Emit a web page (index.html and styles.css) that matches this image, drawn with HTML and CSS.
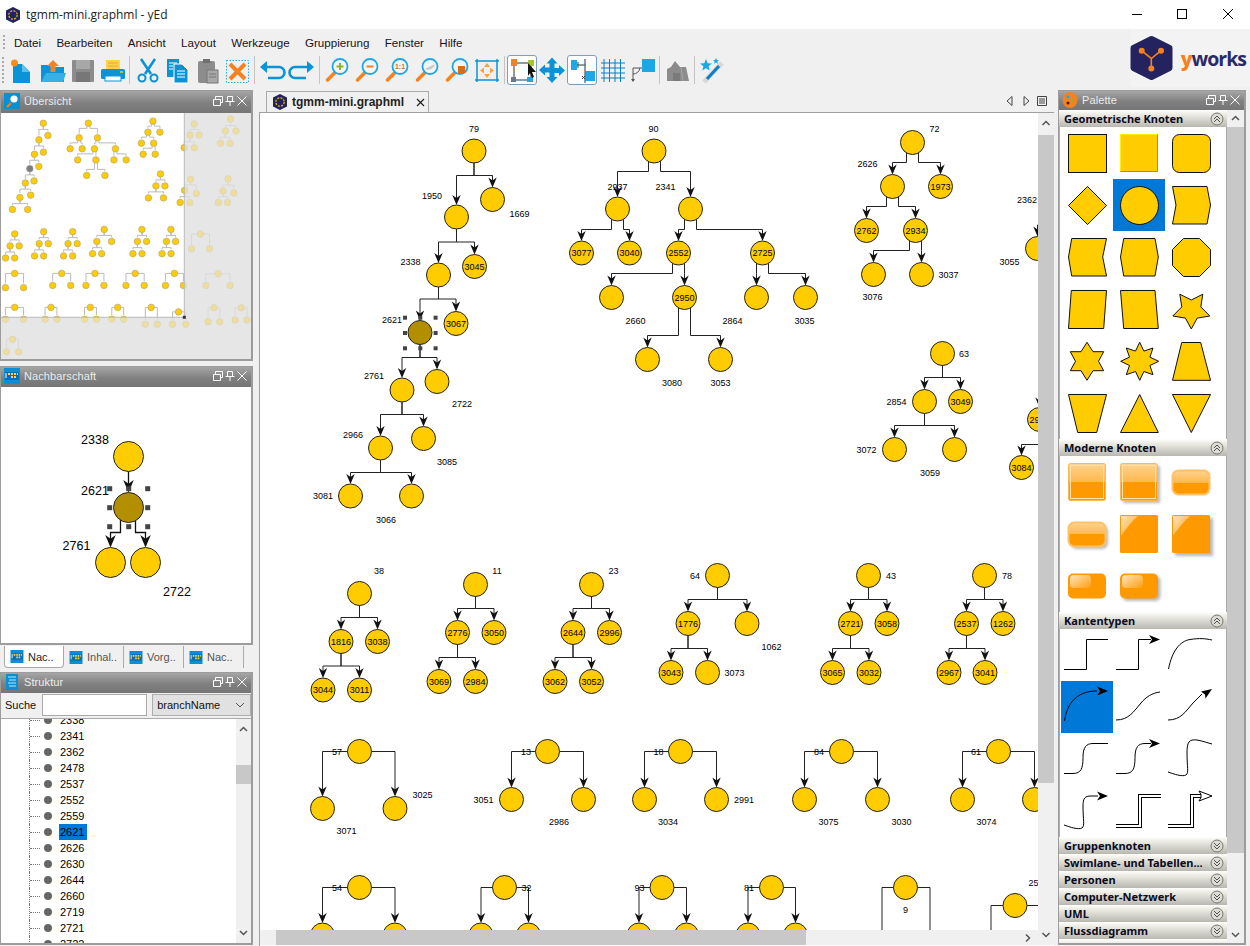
FILE: index.html
```html
<!DOCTYPE html>
<html lang="de">
<head>
    <meta charset="UTF-8">
    <title>tgmm-mini.graphml - yEd</title>
    <link rel="stylesheet" href="styles.css">
</head>
<body>
    <!-- shared icons -->
    <svg class="defs" width="0" height="0">
        <defs>
            <symbol id="ic-restore" viewBox="0 0 12 12"><path d="M1.5 4.5h7v6h-7zM3.5 4.5v-3h7v6h-2" fill="none" stroke="#fff"/></symbol>
            <symbol id="ic-pin" viewBox="0 0 12 12"><path d="M3.5 1.5h5v5h-5zM1.5 6.5h9M6 6.5v4.5" fill="none" stroke="#fff"/></symbol>
            <symbol id="ic-close" viewBox="0 0 12 12"><path d="M1.5 1.5l9 9M10.5 1.5l-9 9" fill="none" stroke="#fff"/></symbol>
            <symbol id="ic-table" viewBox="0 0 16 16"><rect width="16" height="16" fill="#0a8fd6"/><rect y="4" x="1" width="14" height="8" fill="#0a6fb0"/><path d="M4 5h2v2H4zM7 5h2v2H7zM10 5h2v2h-2zM7 8h2v2H7zM10 8h2v2h-2zM13 5h1v2h-1z" fill="#ffd24d"/><path d="M1.5 5h1v5h-1z" fill="#fff"/></symbol>
            <symbol id="ic-up" viewBox="0 0 14 14"><circle cx="7" cy="7" r="6" fill="#dcdcd4" stroke="#77776f"/><path d="M4 7l3-3 3 3M4 10l3-3 3 3" fill="none" stroke="#55554f"/></symbol>
            <symbol id="ic-down" viewBox="0 0 14 14"><circle cx="7" cy="7" r="6" fill="#dcdcd4" stroke="#77776f"/><path d="M4 4l3 3 3-3M4 7l3 3 3-3" fill="none" stroke="#55554f"/></symbol>
            <symbol id="ic-yed" viewBox="0 0 16 16"><path d="M8 0l7 3.5v9L8 16l-7-3.5v-9z" fill="#24235f"/><circle cx="8" cy="8" r="4.2" fill="none" stroke="#e8c400" stroke-width="1.2" stroke-dasharray="2 1.3"/></symbol>
            <symbol id="mag" viewBox="0 0 28 28"><path d="M12 16.5L4.5 24" stroke="#f58220" stroke-width="3.5" stroke-linecap="round"/><circle cx="17" cy="10.5" r="7.5" fill="#f4f4f4" stroke="#1ea7e6" stroke-width="1.8"/></symbol>
            <linearGradient id="gloss" x1="0" y1="0" x2="0" y2="1">
                <stop offset="0" stop-color="#ffd38f"/>
                <stop offset=".5" stop-color="#ffb84d"/>
                <stop offset=".5" stop-color="#ff9900"/>
                <stop offset="1" stop-color="#ff9900"/>
            </linearGradient>
            <linearGradient id="shine" x1="0" y1="0" x2="1" y2="1">
                <stop offset="0" stop-color="#fff" stop-opacity=".75"/>
                <stop offset="1" stop-color="#fff" stop-opacity=".05"/>
            </linearGradient>
            <filter id="soft" x="-20%" y="-20%" width="140%" height="140%"><feGaussianBlur stdDeviation="1.4"/></filter>
        </defs>
    </svg>

    <header class="titlebar">
        <svg class="app-icon"><use href="#ic-yed"/></svg>
        <span class="app-title">tgmm-mini.graphml - yEd</span>
        <div class="win-btns">
            <svg width="46" height="26" viewBox="0 0 46 26"><path d="M20 12.500h10" stroke="#000"/></svg>
            <svg width="46" height="26" viewBox="0 0 46 26"><rect x="19.500" y="7.500" width="9" height="9" fill="none" stroke="#000"/></svg>
            <svg width="46" height="26" viewBox="0 0 46 26"><path d="M19 7l10 10M29 7L19 17" stroke="#000"/></svg>
        </div>
    </header>

    <div class="topbar">
        <div class="bars">
            <nav class="menubar">
                <span class="grip"></span>
                <span>Datei</span><span>Bearbeiten</span><span>Ansicht</span><span>Layout</span><span>Werkzeuge</span><span>Gruppierung</span><span>Fenster</span><span>Hilfe</span>
            </nav>
            <div class="toolbar">
                <span class="grip tall"></span>
                <span class="tool"><svg viewBox="0 0 28 28"><path d="M5 8h9l8 8v11H5z" fill="#0a93d6"/><path d="M14 8l8 8h-8z" fill="#5cc0ee"/><circle cx="6.5" cy="7" r="3.5" fill="#f58f1f"/></svg></span>
                <span class="tool"><svg viewBox="0 0 28 28"><path d="M3 9h8l2 2h13v15H3z" fill="#0a93d6"/><path d="M3 26l5-9h20l-3 9z" fill="#38b0e6"/><path d="M15 4l6 6h-3.500v6h-5v-6H9z" fill="#f58220"/></svg></span>
                <span class="tool"><svg viewBox="0 0 28 28"><rect x="4" y="4" width="22" height="22" rx="1" fill="#8c8c8c"/><rect x="8" y="4" width="14" height="9" fill="#a8a8a8"/><rect x="8" y="16" width="14" height="10" fill="#777"/></svg></span>
                <span class="tool"><svg viewBox="0 0 28 28"><rect x="8" y="4" width="14" height="11" fill="#ffd24d"/><path d="M10 7h10M10 10h10" stroke="#f0a030"/><rect x="3" y="13" width="24" height="10" rx="1.500" fill="#0a93d6"/><rect x="7" y="20" width="16" height="5" fill="#fff" stroke="#0a93d6"/><path d="M22 16h3" stroke="#9ad14b" stroke-width="2"/></svg></span>
                <span class="sep"></span>
                <span class="tool"><svg viewBox="0 0 28 28"><path d="M12 18L22 3M18 18L8 3" stroke="#0a93d6" stroke-width="2.600" fill="none"/><circle cx="9" cy="22" r="3.500" fill="none" stroke="#0a93d6" stroke-width="2"/><circle cx="21" cy="22" r="3.500" fill="none" stroke="#0a93d6" stroke-width="2"/></svg></span>
                <span class="tool"><svg viewBox="0 0 28 28"><rect x="4" y="3" width="12" height="18" fill="#0a93d6"/><path d="M11 8h8l6 6v13H11z" fill="#0a93d6" stroke="#fff"/><path d="M6 7h8M6 10h4M6 13h4M14 15h8M14 18h8M14 21h8" stroke="#fff"/></svg></span>
                <span class="tool"><svg viewBox="0 0 28 28"><rect x="5" y="5" width="17" height="22" rx="2" fill="#8c8c8c"/><rect x="10" y="3" width="7" height="4" fill="#6f6f6f"/><rect x="14" y="14" width="11" height="13" fill="#a8a8a8" stroke="#777"/><path d="M16 18h7M16 21h7" stroke="#777"/></svg></span>
                <span class="tool"><svg viewBox="0 0 28 28"><rect x="3.500" y="4.500" width="22" height="22" fill="none" stroke="#35a8e0" stroke-dasharray="1.500 1.500"/><path d="M7 8l15 15M22 8L7 23" stroke="#f58220" stroke-width="4"/></svg></span>
                <span class="sep"></span>
                <span class="tool"><svg viewBox="0 0 28 28"><path d="M8 11h13a5.500 5.500 0 0 1 0 11H10" fill="none" stroke="#0a93d6" stroke-width="2.600"/><path d="M2 11l7-6v12z" fill="#0a93d6"/></svg></span>
                <span class="tool"><svg viewBox="0 0 28 28"><path d="M20 11H7a5.500 5.500 0 0 0 0 11h11" fill="none" stroke="#0a93d6" stroke-width="2.600"/><path d="M26 11l-7-6v12z" fill="#0a93d6"/></svg></span>
                <span class="sep"></span>
                <span class="tool"><svg viewBox="0 0 28 28"><use href="#mag"/><path d="M13.500 10.500h7M17 7v7" stroke="#8fb52a" stroke-width="2"/></svg></span>
                <span class="tool"><svg viewBox="0 0 28 28"><use href="#mag"/><path d="M13.500 10.500h7" stroke="#f58220" stroke-width="2"/></svg></span>
                <span class="tool"><svg viewBox="0 0 28 28"><use href="#mag"/><text class="one" x="17" y="13">1:1</text></svg></span>
                <span class="tool"><svg viewBox="0 0 28 28"><use href="#mag"/><path d="M12 13a7 7 0 0 0 10-5z" fill="#c8c8c8"/></svg></span>
                <span class="tool"><svg viewBox="0 0 28 28"><use href="#mag"/><rect x="15" y="10" width="7" height="7" fill="#e06a10"/></svg></span>
                <span class="tool"><svg viewBox="0 0 28 28"><path d="M2 5h24M2 24h24M4 3v23M24 3v23" stroke="#0a93d6" stroke-width="1.500"/><path d="M14 7l3 4h-6zM14 22l-3-4h6zM7 14.500l4-3v6zM21 14.500l-4-3v6z" fill="#f9a040"/></svg></span>
                <span class="sep"></span>
                <span class="tool on"><svg viewBox="0 0 28 28"><path d="M6 7v17h17V7z" fill="none" stroke="#6c7a86" stroke-width="1.500"/><rect x="3" y="3" width="6" height="7" fill="#f58220"/><rect x="20" y="4" width="6" height="6" fill="#a6c438"/><rect x="3" y="21" width="5" height="5" fill="#6c7a86"/><rect x="19" y="21" width="6" height="5" fill="#1ea7e6"/><path d="M20 7l8 9-4 0 2 5-2 1-2-5-2 3z" fill="#111"/></svg></span>
                <span class="tool"><svg viewBox="0 0 28 28"><path d="M14 1.500l5.500 6H16.500v4.500H21V9l6 5.500-6 5.500v-3h-4.500V21h3L14 27l-5.500-6h3v-4.500H7v3l-6-5.500 6-5.500v3h4.500V7.500h-3z" fill="#0a93d6"/></svg></span>
                <span class="tool on"><svg viewBox="0 0 28 28"><rect x="3" y="4" width="6" height="10" fill="#1ea7e6"/><rect x="17" y="15" width="10" height="10" fill="#1ea7e6"/><path d="M9 9h9M17 3v24" stroke="#6c7a86" stroke-width="1.500"/><path d="M10 6v6M14 20l3 3M17 20l-3 3" stroke="#444"/></svg></span>
                <span class="tool"><svg viewBox="0 0 28 28"><path d="M3 7h24M3 12h24M3 17h24M3 22h24M6 3v23M11.500 3v23M17 3v23M22.500 3v23" stroke="#0a7fc8"/></svg></span>
                <span class="tool"><svg viewBox="0 0 28 28"><rect x="14" y="3" width="13" height="13" fill="#1ea7e6"/><path d="M5 25V12h9M5 18a7 7 0 0 0 7-6" fill="none" stroke="#555"/><path d="M3 23h4l-2 3z" fill="#555"/></svg></span>
                <span class="sep"></span>
                <span class="tool"><svg viewBox="0 0 28 28"><path d="M4 25V13l4-2 4-6 5 6h6l3 14z" fill="#8c8c8c"/><path d="M10 17h7v8h-7z" fill="#7a7a7a"/><path d="M18 11l2 14" stroke="#a6a6a6"/></svg></span>
                <span class="sep"></span>
                <span class="tool"><svg viewBox="0 0 28 28"><path d="M8 3l1.700 4.200 4.300.3-3.400 2.800 1.100 4.300L8 12.300l-3.700 2.300 1.100-4.300L2 7.500l4.300-.3zM18 2l.9 2 2.100.2-1.600 1.400.500 2.100L18 6.600l-1.900 1.100.500-2.100L15 4.200l2.100-.2z" fill="#1ea7e6"/><path d="M6 26L24 7" stroke="#d8d8d8" stroke-width="5"/><path d="M9 23L21 10" stroke="#0a7fc8" stroke-width="3"/></svg></span>
            </div>
        </div>
        <div class="logo">
            <svg width="44" height="46" viewBox="0 0 44 46">
                <polygon points="21.500,4 39.500,13 39.500,33 21.500,42 3.500,33 3.500,13" fill="#24235f" stroke="#24235f" stroke-width="6" stroke-linejoin="round"/>
                <path d="M11.500 15.700L21.300 23.500 31 15.700M21.300 23.500V33" fill="none" stroke="#f58220" stroke-width="1.600"/>
                <circle cx="11.700" cy="15.700" r="3" fill="#f58220"/><circle cx="31" cy="15.700" r="3" fill="#f58220"/><circle cx="21.300" cy="33.500" r="3" fill="#f58220"/>
            </svg>
            <span class="logo-text"><b>y</b>works</span>
        </div>
    </div>

    <main class="workspace">
        <div class="left-col">
            <section class="panel overview">
                <div class="panel-head">
                    <svg class="panel-icon" viewBox="0 0 16 16"><rect width="16" height="16" fill="#0a8fd6"/><path d="M3 14l4-4" stroke="#f58220" stroke-width="2"/><circle cx="10" cy="6" r="3.600" fill="#fff"/></svg>
                    <span>Übersicht</span>
                    <span class="panel-tools"><svg><use href="#ic-restore"/></svg><svg><use href="#ic-pin"/></svg><svg><use href="#ic-close"/></svg></span>
                </div>
                <svg id="overview-svg" class="fill-svg" viewBox="304.8 110 1000 984"></svg>
            </section>
            <section class="panel neighbours">
                <div class="panel-head">
                    <svg class="panel-icon"><use href="#ic-table"/></svg>
                    <span>Nachbarschaft</span>
                    <span class="panel-tools"><svg><use href="#ic-restore"/></svg><svg><use href="#ic-pin"/></svg><svg><use href="#ic-close"/></svg></span>
                </div>
                <svg id="neighbour-svg" class="fill-svg" viewBox="1 387 250 256"></svg>
            </section>
            <div class="side-tabs">
                <div class="side-tab active"><svg><use href="#ic-table"/></svg>Nac..</div>
                <div class="side-tab"><svg><use href="#ic-table"/></svg>Inhal..</div>
                <div class="side-tab"><svg><use href="#ic-table"/></svg>Vorg..</div>
                <div class="side-tab"><svg><use href="#ic-table"/></svg>Nac..</div>
            </div>
            <section class="panel structure">
                <div class="panel-head">
                    <svg class="panel-icon" viewBox="0 0 16 16"><rect x="2" width="12" height="16" fill="#0a8fd6"/><path d="M4 3h8M5 6h7M4 9h8M5 12h7" stroke="#bfe6fa"/></svg>
                    <span>Struktur</span>
                    <span class="panel-tools"><svg><use href="#ic-restore"/></svg><svg><use href="#ic-pin"/></svg><svg><use href="#ic-close"/></svg></span>
                </div>
                <div class="search-row">
                    <span>Suche</span>
                    <input class="search-input" type="text">
                    <div class="select">branchName<svg width="10" height="6" viewBox="0 0 10 6"><path d="M1 1l4 4 4-4" fill="none" stroke="#555"/></svg></div>
                </div>
                <div class="tree-wrap">
                    <ul class="tree">
                        <li><i></i><b></b><span>2338</span></li>
                        <li><i></i><b></b><span>2341</span></li>
                        <li><i></i><b></b><span>2362</span></li>
                        <li><i></i><b></b><span>2478</span></li>
                        <li><i></i><b></b><span>2537</span></li>
                        <li><i></i><b></b><span>2552</span></li>
                        <li><i></i><b></b><span>2559</span></li>
                        <li class="sel"><i></i><b></b><span>2621</span></li>
                        <li><i></i><b></b><span>2626</span></li>
                        <li><i></i><b></b><span>2630</span></li>
                        <li><i></i><b></b><span>2644</span></li>
                        <li><i></i><b></b><span>2660</span></li>
                        <li><i></i><b></b><span>2719</span></li>
                        <li><i></i><b></b><span>2721</span></li>
                        <li><i></i><b></b><span>2722</span></li>
                    </ul>
                    <div class="vscroll small">
                        <svg width="15" height="20" viewBox="0 0 15 20"><path d="M4 12l3.500-3.500L11 12" fill="none" stroke="#555" stroke-width="1.500"/></svg>
                        <div class="tree-thumb"></div>
                        <svg class="to-end" width="15" height="20" viewBox="0 0 15 20"><path d="M4 8l3.500 3.500L11 8" fill="none" stroke="#555" stroke-width="1.500"/></svg>
                    </div>
                </div>
            </section>
        </div>

        <div class="center-col">
            <div class="doc-tabs">
                <div class="doc-tab">
                    <svg class="doc-icon"><use href="#ic-yed"/></svg>
                    <span>tgmm-mini.graphml</span>
                    <svg width="9" height="9" viewBox="0 0 9 9"><path d="M1 1l7 7M8 1L1 8" stroke="#222" stroke-width="1.200"/></svg>
                </div>
                <div class="doc-nav">
                    <svg width="16" height="12" viewBox="0 0 16 12"><path d="M10 1.500L5 6l5 4.500z" fill="none" stroke="#444"/></svg>
                    <svg width="16" height="12" viewBox="0 0 16 12"><path d="M6 1.500L11 6l-5 4.500z" fill="none" stroke="#444"/></svg>
                    <svg width="16" height="12" viewBox="0 0 16 12"><path d="M3.500 1.500h9v9h-9zM5 4h6M5 6h6M5 8h6" fill="none" stroke="#444"/></svg>
                </div>
            </div>
            <div class="canvas-frame">
                <svg id="canvas-svg" class="canvas-svg" viewBox="260 113 778 817"></svg>
                <div class="vscroll">
                    <svg width="16" height="22" viewBox="0 0 16 22"><path d="M4.500 12L8 8.500l3.500 3.500" fill="none" stroke="#555" stroke-width="1.500"/></svg>
                    <div class="canvas-thumb"></div>
                    <svg class="to-end" width="16" height="20" viewBox="0 0 16 20"><path d="M4.500 8L8 11.500 11.500 8" fill="none" stroke="#555" stroke-width="1.500"/></svg>
                </div>
                <div class="hscroll">
                    <div class="hscroll-thumb"></div>
                    <svg width="16" height="16" viewBox="0 0 16 16"><path d="M6 4.500L9.500 8 6 11.500" fill="none" stroke="#555" stroke-width="1.500"/></svg>
                </div>
            </div>
        </div>

        <section class="panel palette">
            <div class="panel-head">
                <svg class="panel-icon" viewBox="0 0 16 16"><ellipse cx="8" cy="8" rx="7.500" ry="8" fill="#f58220"/><circle cx="6" cy="5" r="1.500" fill="#1ea7e6"/><circle cx="10" cy="8" r="1.500" fill="#8fb52a"/><circle cx="6" cy="11" r="1.500" fill="#24235f"/></svg>
                <span>Palette</span>
                <span class="panel-tools"><svg><use href="#ic-restore"/></svg><svg><use href="#ic-pin"/></svg><svg><use href="#ic-close"/></svg></span>
            </div>
            <div class="palette-body">
                <div class="sections">
                    <div class="sec-head">Geometrische Knoten<svg><use href="#ic-up"/></svg></div>
                    <div class="cells geo">
                        <svg viewBox="0 0 52 52"><rect x="7.500" y="7.500" width="38" height="38"/></svg>
                        <svg viewBox="0 0 52 52"><rect class="bevel" x="7.500" y="7.500" width="37" height="37"/><path d="M7.500 44.500h37v-37" fill="none" stroke="#b38f00"/></svg>
                        <svg viewBox="0 0 52 52"><rect x="7.500" y="7.500" width="38" height="38" rx="7"/></svg>
                        <svg viewBox="0 0 52 52"><polygon points="26.500,7.500 45.500,26.500 26.500,45.500 7.500,26.500"/></svg>
                        <svg class="picked" viewBox="0 0 52 52"><circle cx="26.500" cy="26.500" r="19"/></svg>
                        <svg viewBox="0 0 52 52"><polygon points="7.500,7.500 42,7.500 45.500,26 42,45 7.500,45 11,26"/></svg>
                        <svg viewBox="0 0 52 52"><polygon points="10.700,7.500 45.500,7.500 41.700,26 45.500,45 10.700,45 7.500,26"/></svg>
                        <svg viewBox="0 0 52 52"><polygon points="10.700,7.500 42,7.500 45.300,26 42,45 10.700,45 7.500,26"/></svg>
                        <svg viewBox="0 0 52 52"><polygon points="18.500,7.500 34.500,7.500 45.500,18.500 45.500,34.500 34.500,45.500 18.500,45.500 7.500,34.500 7.500,18.500"/></svg>
                        <svg viewBox="0 0 52 52"><polygon points="10.300,7.500 45.500,7.500 42.700,45.500 7.500,45.500"/></svg>
                        <svg viewBox="0 0 52 52"><polygon points="7.500,7.500 42,7.500 45.300,45.500 10.700,45.500"/></svg>
                        <svg viewBox="0 0 52 52"><polygon points="14.800,11.200 26.300,17 37.800,11.200 35.800,23.900 44.800,33 32.200,35.100 26.300,46 20.400,35.100 7.800,33 16.800,23.900"/></svg>
                        <svg viewBox="0 0 52 52"><polygon points="26,7.300 32,16.700 42.700,16.700 37.500,26.300 42.700,35.700 32,35.700 26,45.300 20,35.700 9.300,35.700 14.500,26.300 9.300,16.700 20,16.700"/></svg>
                        <svg viewBox="0 0 52 52"><polygon points="26.700,7.300 30.900,16.100 40,13 36.900,22.100 45.700,26.300 36.900,30.500 40,39.700 30.900,36.500 26.700,45.300 22.500,36.500 13.300,39.700 16.500,30.500 7.700,26.300 16.500,22.100 13.300,13 22.500,16.100"/></svg>
                        <svg viewBox="0 0 52 52"><polygon points="16.700,7.500 35.700,7.500 45.500,45.300 7.500,45.300"/></svg>
                        <svg viewBox="0 0 52 52"><polygon points="7.500,7.500 45.500,7.500 35.700,45.500 16.700,45.500"/></svg>
                        <svg viewBox="0 0 52 52"><polygon points="26.700,7.500 45.300,45.500 7.500,45.500"/></svg>
                        <svg viewBox="0 0 52 52"><polygon points="7.500,7.500 45.500,7.500 26.300,45.500"/></svg>
                    </div>
                    <div class="sec-head">Moderne Knoten<svg><use href="#ic-up"/></svg></div>
                    <div class="cells modern">
                        <svg viewBox="0 0 52 52"><rect x="7.500" y="7.500" width="37" height="37" rx="2" fill="url(#gloss)" stroke="#ffb84d" stroke-width="1"/><rect x="9.500" y="9.500" width="33" height="33" fill="none" stroke="#ffe0b0"/></svg>
                        <svg viewBox="0 0 52 52"><rect class="shade" x="10" y="10" width="37" height="37"/><rect x="7.500" y="7.500" width="37" height="37" rx="2" fill="url(#gloss)" stroke="#ffb84d"/><rect x="9.500" y="9.500" width="33" height="33" fill="none" stroke="#ffe0b0"/></svg>
                        <svg viewBox="0 0 52 52"><rect x="7.500" y="14.500" width="37" height="24" rx="6" fill="url(#gloss)" stroke="#ffc266" stroke-width="2"/></svg>
                        <svg viewBox="0 0 52 52"><rect class="shade" x="10" y="17" width="37" height="24" rx="6"/><rect x="7.500" y="14.500" width="37" height="24" rx="6" fill="url(#gloss)" stroke="#ffc266" stroke-width="2"/></svg>
                        <svg viewBox="0 0 52 52"><rect x="7" y="7" width="38" height="38" rx="1.500" fill="#ff9900"/><path d="M8 8h17Q17 15 8 28z" fill="url(#shine)"/></svg>
                        <svg viewBox="0 0 52 52"><rect class="shade" x="10" y="10" width="38" height="38"/><rect x="7" y="7" width="38" height="38" rx="1.500" fill="#ff9900"/><path d="M8 8h17Q17 15 8 28z" fill="url(#shine)"/></svg>
                        <svg viewBox="0 0 52 52"><rect x="7" y="13.500" width="38" height="25" rx="5" fill="#ff9900"/><rect x="9" y="15" width="21" height="13" rx="4" fill="url(#shine)"/></svg>
                        <svg viewBox="0 0 52 52"><rect class="shade" x="9.500" y="16" width="38" height="25" rx="5"/><rect x="7" y="13.500" width="38" height="25" rx="5" fill="#ff9900"/><rect x="9" y="15" width="21" height="13" rx="4" fill="url(#shine)"/></svg>
                        <svg viewBox="0 0 52 52"></svg>
                    </div>
                    <div class="sec-head">Kantentypen<svg><use href="#ic-up"/></svg></div>
                    <div class="cells edges">
                        <svg viewBox="0 0 52 52"><path d="M3 40.500h22.500v-30H47"/></svg>
                        <svg viewBox="0 0 52 52"><path d="M3 40.500h22.500v-30H38"/><path class="tip" d="M47 10.500l-11-4.500 3 4.500-3 4.500z"/></svg>
                        <svg viewBox="0 0 52 52"><path d="M3.500 40C7 22 15 12 25 10.500S40 9.500 47 11"/></svg>
                        <svg class="picked" viewBox="0 0 52 52"><path d="M3.500 40C6 22 16 10 36 10"/><path class="tip" d="M47 10l-11-4.500 3 4.500-3 4.500z"/></svg>
                        <svg viewBox="0 0 52 52"><path d="M3 39c13 0 18-9 25-17 5-6 11-10 19-11"/></svg>
                        <svg viewBox="0 0 52 52"><path d="M3 39c13 0 18-9 25-17l9-9"/><path class="tip" d="M47 8l-11 2.500 4 3 .5 4z"/></svg>
                        <svg viewBox="0 0 52 52"><path d="M3 40.500h9c8 0 10-5 10-16 0-10 3-14 10-14h15"/></svg>
                        <svg viewBox="0 0 52 52"><path d="M3 40.500h9c8 0 10-5 10-16 0-10 3-14 10-14h6"/><path class="tip" d="M47 10.500l-11-4.500 3 4.500-3 4.500z"/></svg>
                        <svg viewBox="0 0 52 52"><path d="M3 39c6 2 14 5 18 3 3-2 1-8 1-22 0-11 2-14 10-13 6 1 11 3 15 4"/></svg>
                        <svg viewBox="0 0 52 52"><path d="M3 40c6 2 14 5 18 3 3-2 1-8 1-22 0-8 2-10 8-10h7"/><path class="tip" d="M47 11l-11-4.500 3 4.500-3 4.500z"/></svg>
                        <svg viewBox="0 0 52 52"><path class="dbl-out" d="M3 41h24V11h21"/><path class="dbl-in" d="M3 41h24V11h21"/></svg>
                        <svg viewBox="0 0 52 52"><path class="dbl-out" d="M3 41h24V11h11"/><path class="dbl-in" d="M3 41h24V11h12"/><path class="tip-hollow" d="M47 11l-13-5 2 3.500v3l-2 3.500z"/></svg>
                    </div>
                    <div class="sec-head">Gruppenknoten<svg><use href="#ic-down"/></svg></div>
                    <div class="sec-head">Swimlane- und Tabellen...<svg><use href="#ic-down"/></svg></div>
                    <div class="sec-head">Personen<svg><use href="#ic-down"/></svg></div>
                    <div class="sec-head">Computer-Netzwerk<svg><use href="#ic-down"/></svg></div>
                    <div class="sec-head">UML<svg><use href="#ic-down"/></svg></div>
                    <div class="sec-head">Flussdiagramm<svg><use href="#ic-down"/></svg></div>
                    <div class="sec-head"></div>
                </div>
                <div class="vscroll pal-scroll">
                    <svg width="17" height="17" viewBox="0 0 17 17"><path d="M5 10l3.500-3.500L12 10" fill="none" stroke="#555" stroke-width="1.500"/></svg>
                    <div class="pal-thumb"></div>
                    <svg class="to-end" width="17" height="16" viewBox="0 0 17 16"><path d="M5 6l3.500 3.500L12 6" fill="none" stroke="#555" stroke-width="1.500"/></svg>
                </div>
            </div>
        </section>
    </main>

    <script src="graph.js"></script>
</body>
</html>
```

FILE: styles.css
```css
* {
    box-sizing: border-box;
}

html, body {
    margin: 0;
    height: 946px;
    overflow: hidden;
    background: #f0f0f0;
    font-family: "Liberation Sans", Arial, sans-serif;
    font-size: 11px;
    color: #111;
}

.defs {
    position: absolute;
}

/* title bar */
.titlebar {
    height: 29px;
    background: #fff;
    display: flex;
    align-items: center;
    padding-left: 5px;
}
.app-icon {
    width: 16px;
    height: 16px;
}
.app-title {
    margin-left: 5px;
    font-family: "Open Sans", sans-serif;
    font-size: 12px;
    color: #222;
}
.win-btns {
    margin-left: auto;
    display: flex;
}

/* menu and toolbar */
.topbar {
    height: 61px;
    display: flex;
    justify-content: space-between;
    background: #f0f0f0;
}
.menubar {
    height: 24px;
    display: flex;
    align-items: center;
    gap: 15.3px;
    padding: 2px 0 0 14px;
    font-size: 11.6px;
    color: #1a1020;
}
.grip {
    width: 2px;
    height: 14px;
    margin-left: -11px;
    margin-right: -6.300px;
    background: repeating-linear-gradient(#aaa 0 2px, transparent 2px 4px);
}
.grip.tall {
    height: 26px;
    margin: 0 3px 0 2px;
}
.toolbar {
    height: 33px;
    display: flex;
    align-items: center;
}
.tool {
    width: 30px;
    height: 30px;
    display: flex;
    align-items: center;
    justify-content: center;
    border: 1px solid transparent;
}
.tool svg {
    width: 28px;
    height: 28px;
    flex: none;
}
.tool.on {
    background: #fff;
    border-color: #7f9db9;
    border-radius: 3px;
}
.one {
    font: bold 7px "Liberation Sans", sans-serif;
    text-anchor: middle;
    fill: #d9731a;
}
.sep {
    width: 5px;
    height: 28px;
    background: linear-gradient(#c4c4c4, #c4c4c4) center / 1px 100% no-repeat;
}
.logo {
    display: flex;
    align-items: center;
    gap: 7px;
    padding-right: 4px;
    height: 58px;
    background: #f3f3f3;
}
.logo-text {
    font: bold 19.500px "Open Sans", sans-serif;
    letter-spacing: -1px;
    color: #2b2a66;
}
.logo-text b {
    color: #f58220;
}

/* main three columns */
.workspace {
    height: 856px;
    display: grid;
    grid-template-columns: 253px 805px 188px;
    padding-right: 4px;
}
.left-col {
    display: flex;
    flex-direction: column;
}
.panel {
    border: 1px solid #9c9c9c;
    border-width: 1px 2px 2px 1px;
    background: #fff;
    display: flex;
    flex-direction: column;
}
.panel-head {
    height: 22px;
    flex: none;
    display: flex;
    align-items: center;
    padding: 0 3px 2px;
    background: linear-gradient(#a6a6a6, #808080 55%, #757575);
    color: #ececec;
    font-size: 11px;
    letter-spacing: .1px;
}
.panel-icon {
    width: 16px;
    height: 16px;
    margin-right: 4px;
    flex: none;
}
.panel-tools {
    margin-left: auto;
    display: flex;
}
.panel-tools svg {
    width: 12px;
    height: 12px;
}
.fill-svg {
    display: block;
    width: 100%;
    flex: 1;
    min-height: 0;
}

.overview {
    height: 271px;
}
.overview .fill-svg {
    background: #e6e6e6;
}
.neighbours {
    height: 279px;
    margin-top: 5px;
}
.neighbours .panel-head {
    height: 20px;
}
.side-tabs {
    height: 22px;
    flex: none;
    margin: 1px 0 4px 4px;
    display: flex;
    color: #555;
}
.side-tab {
    width: 60px;
    display: flex;
    align-items: center;
    gap: 3px;
    padding-left: 4px;
    border-right: 1px solid #aaa;
}
.side-tab svg {
    width: 16px;
    height: 13px;
}
.side-tab.active {
    border: 1px solid #aaa;
    border-top: 0;
    border-radius: 0 0 4px 4px;
    background: #fff;
    color: #222;
}
.structure {
    height: 273px;
    background: #f0f0f0;
}
.structure .panel-head {
    height: 20px;
}
.search-row {
    height: 26px;
    flex: none;
    display: flex;
    align-items: center;
    padding: 0 0 1px 4px;
    border-bottom: 1px solid #aaa;
}
.search-input {
    width: 105px;
    height: 22px;
    margin: 0 5px 0 6px;
    border: 1px solid #aaa;
    background: #fff;
}
.select {
    width: 100px;
    height: 22px;
    display: flex;
    align-items: center;
    justify-content: space-between;
    padding: 0 5px 0 4px;
    background: #e1e1e1;
    border: 1px solid #adadad;
}
.tree-wrap {
    flex: 1;
    min-height: 0;
    background: #fff;
    display: flex;
    overflow: hidden;
}
.tree {
    flex: 1;
    list-style: none;
    margin: -7px 0 0 0;
    padding: 0 0 0 28px;
}
.tree li {
    height: 16px;
    display: flex;
    align-items: center;
    border-left: 1px dotted #777;
    color: #000;
}
.tree i {
    width: 10px;
    border-top: 1px dotted #777;
}
.tree b {
    width: 8px;
    height: 8px;
    margin: 0 8px 0 4px;
    background: #666;
    border-radius: 50%;
}
.tree span {
    padding: 1px 3px 1px 1px;
    margin-left: -1px;
    line-height: 14px;
}
.tree .sel span {
    background: #0078d7;
}
.vscroll {
    width: 16px;
    flex: none;
    background: #f0f0f0;
    display: flex;
    flex-direction: column;
}
.vscroll svg {
    flex: none;
    display: block;
}
.vscroll .to-end {
    margin-top: auto;
}
.vscroll.small {
    width: 15px;
}
.tree-thumb {
    width: 15px;
    height: 19px;
    margin-top: 26px;
    background: #c8c8c8;
}

/* document area */
.center-col {
    display: flex;
    flex-direction: column;
    margin-left: 6px;
    width: 795px;
}
.doc-tabs {
    height: 22px;
    flex: none;
    display: flex;
    align-items: flex-end;
    justify-content: space-between;
    padding-left: 7px;
}
.doc-tab {
    width: 163px;
    height: 21px;
    display: flex;
    align-items: center;
    gap: 4px;
    padding-left: 5px;
    background: #f0f0f0;
    border: 1px solid #aaa;
    border-bottom: 0;
    font-size: 12px;
    font-weight: bold;
    color: #222;
}
.doc-tab span {
    margin-right: 8px;
}
.doc-icon {
    width: 16px;
    height: 16px;
}
.doc-nav {
    display: flex;
    align-self: center;
    margin-right: 4px;
}
.canvas-frame {
    flex: 1;
    min-height: 0;
    display: grid;
    grid-template-columns: 778px 16px;
    grid-template-rows: 817px 15px;
    border: solid #a0a0a0;
    border-width: 1px 0 0 1px;
    background: #fff;
}
.canvas-svg {
    width: 778px;
    height: 817px;
    display: block;
    background: #fff;
}
.canvas-frame .vscroll {
    grid-row: 1 / 3;
    grid-column: 2;
    background: #f0f0f0;
    overflow: hidden;
}
.canvas-thumb {
    height: 648px;
    background: #c8c8c8;
}
.hscroll {
    display: flex;
    align-items: center;
    justify-content: space-between;
    padding-left: 16px;
    background: #f0f0f0;
    padding-right: 2px;
}
.hscroll-thumb {
    width: 530px;
    height: 15px;
    background: #c8c8c8;
}

/* palette */
.palette {
    width: 188px;
    background: #f0f0f0;
    height: 855px;
}
.palette .panel-head {
    height: 19px;
}
.palette-body {
    flex: 1;
    min-height: 0;
    display: flex;
    overflow: hidden;
}
.sections {
    width: 168px;
    flex: none;
}
.sec-head {
    height: 17px;
    display: flex;
    align-items: center;
    justify-content: space-between;
    padding: 0 3px 0 5px;
    background: linear-gradient(#fff, #f0efe8 20%, #b9b8b0);
    font: bold 11px "Noto Sans", sans-serif;
    color: #0a0a20;
    white-space: nowrap;
}
.sec-head svg {
    width: 14px;
    height: 14px;
    flex: none;
}
.cells {
    display: grid;
    grid-template-columns: repeat(3, 52px);
    grid-auto-rows: 52px;
    background: #fff;
    border: 1px solid #aaa;
    border-width: 0 1px;
    padding-left: 1px;
    width: 168px;
}
.cells svg {
    width: 52px;
    height: 52px;
    display: block;
}
.cells .picked {
    background: #0078d7;
}
.geo rect, .geo polygon, .geo circle {
    fill: #ffcc00;
    stroke: #111;
    stroke-width: 1;
}
.geo .bevel {
    stroke: #ffee00;
}
.shade {
    fill: #888;
    opacity: .6;
    filter: url(#soft);
}
.edges path {
    fill: none;
    stroke: #000;
    stroke-width: 1;
}
.edges .tip {
    fill: #000;
    stroke: none;
}
.edges .dbl-out {
    stroke-width: 4;
}
.edges .dbl-in {
    stroke: #fff;
    stroke-width: 2;
}
.edges .tip-hollow {
    fill: #fff;
    stroke: #000;
}
.pal-scroll {
    width: 17px;
}
.pal-thumb {
    height: 726px;
    background: #c8c8c8;
}

/* graph drawing, see graph.js */
.link {
    fill: none;
    stroke: #222;
    stroke-width: 1;
}
.arrow {
    fill: #111;
}
.node {
    fill: #ffcc00;
    stroke: #222;
    stroke-width: 1;
}
.node.selected {
    fill: #b38f00;
}
.lbl {
    font-family: "Liberation Sans", Arial, sans-serif;
    font-size: 9px;
    text-anchor: middle;
    dominant-baseline: central;
    fill: #000;
}
.handle {
    fill: #444;
}
.mini .link {
    stroke: #bbb;
    stroke-width: 4;
}
.mini .node {
    stroke: #b9ac76;
    stroke-width: 3;
}
.mini .node.selected {
    fill: #7d7d7d;
    stroke: #999;
}
.mini .dim {
    fill: #e6e6e6;
    fill-rule: evenodd;
    opacity: .68;
}
.mini .view {
    fill: none;
    stroke: #bbb;
    stroke-width: 4;
}
.mini .handle {
    fill: #333;
}
.near .link {
    stroke: #111;
    stroke-width: 1.3;
}
.near .lbl {
    font-size: 12.5px;
}
```

FILE: graph.js
```js
// x, y, label, label x, label y (label sits inside the node when no position is given)
const nodes = [
    // first tree
    [474, 151, '79', 474, 128.5], [456.5, 217, '1950', 432, 196], [492.5, 199.5, '1669', 519.5, 213.5],
    [438.5, 275, '2338', 410.5, 261.5], [474.5, 266.5, '3045'], [420, 332.5, '2621', 392, 319.5], [456, 323.5, '3067'],
    [402, 390, '2761', 374, 376], [437, 381.5, '2722', 462, 403.5], [380.5, 448, '2966', 353, 434.5],
    [423.5, 438.5, '3085', 447, 461.5], [350.5, 496, '3081', 323, 496], [411.5, 496, '3066', 386, 519.5],
    // 90
    [654, 151, '90', 653.5, 128.5], [617.5, 209, '2937', 617.5, 186.5], [690.5, 209, '2341', 665.5, 186.5],
    [581.5, 253, '3077'], [629.5, 253, '3040'], [678.5, 253, '2552'], [762.5, 253, '2725'],
    [611.5, 297.5, '2660', 635.5, 320.5], [684.5, 297.5, '2950'], [756.5, 297.5, '2864', 732.5, 320.5], [805.5, 297.5, '3035', 804.5, 320.5],
    [647.5, 359.5, '3080', 672, 382.5], [720.5, 359.5, '3053', 720.5, 382.5],
    // 72
    [912.5, 142.5, '72', 934.5, 128.5], [892.5, 186.5, '2626', 867.5, 163.5], [940.5, 186.5, '1973'],
    [866.5, 230.5, '2762'], [915.5, 230.5, '2934'], [873.5, 274.5, '3076', 872.5, 296.5], [921.5, 274.5, '3037', 948.5, 274.5],
    // 63
    [942.5, 353.5, '63', 964, 353.5], [924.5, 401.5, '2854', 896.5, 401.5], [960.5, 401.5, '3049'],
    [894.5, 449.5, '3072', 866.5, 449.5], [954.5, 449.5, '3059', 930, 472.5],
    // cut off by the right edge of the view
    [1077, 154], [1061, 198], [1097, 198], [1037.5, 248.5, '2362', 1027, 199.5], [1078, 249, '3055', 1009.5, 261.5],
    [1063, 375], [1039.5, 419.5, '2973'], [1086, 432], [1021.5, 467.5, '3084'], [1060, 468],
    // second row
    [359.5, 593.5, '38', 379, 570.5], [341, 641.5, '1816'], [377.5, 641.5, '3038'], [323, 690, '3044'], [359.5, 690, '3011'],
    [475.5, 584.5, '11', 497, 570.5], [457.5, 632.5, '2776'], [494, 632.5, '3050'], [439, 681.5, '3069'], [475.5, 681.5, '2984'],
    [591.5, 584.5, '23', 613.5, 570.5], [573, 632.5, '2644'], [609.5, 632.5, '2996'], [555, 681.5, '3062'], [591.5, 681.5, '3052'],
    [717.5, 575.5, '64', 695, 575.5], [688, 623.5, '1776'], [747, 623.5, '1062', 771.5, 647], [671, 672.5, '3043'], [707.5, 672.5, '3073', 734.5, 672.5],
    [868.5, 575.5, '43', 891, 575.5], [850.5, 623.5, '2721'], [887, 623.5, '3058'], [832.5, 672.5, '3065'], [869, 672.5, '3032'],
    [984.5, 575.5, '78', 1007, 575.5], [966.5, 623.5, '2537'], [1003, 623.5, '1262'], [949, 672.5, '2967'], [985, 672.5, '3041'],
    // third row
    [359.5, 751.5, '57', 337, 751.5], [322.5, 808.5, '3071', 346.5, 830.5], [395, 808.5, '3025', 422.5, 794.5],
    [547.5, 751.5, '13', 526, 751.5], [511.5, 799.5, '3051', 483.5, 799.5], [583.5, 799.5, '2986', 559, 821.5],
    [680.5, 751.5, '18', 658.5, 751.5], [644.5, 799.5, '3034', 668, 821.5], [716.5, 799.5, '2991', 744, 799.5],
    [841.5, 751.5, '84', 819, 751.5], [804.5, 799.5, '3075', 828.5, 821.5], [877.5, 799.5, '3030', 901.5, 821.5],
    [998.5, 751.5, '61', 976, 751.5], [962.5, 799.5, '3074', 986.5, 821.5], [1034.5, 799.5],
    // fourth row
    [359.5, 887.5, '54', 337, 887.5], [322.5, 935], [395, 935],
    [504.5, 887.5, '32', 526.5, 887.5], [481, 935], [528.5, 935],
    [662, 887.5, '93', 639.5, 887.5], [639, 935], [686.5, 935],
    [771.5, 887.5, '81', 749, 887.5], [748, 935], [795.5, 935],
    [905.5, 887.5, '9', 905.5, 910], [882, 955], [930, 955],
    [1015, 905.5, '2530', 1038.5, 882.5], [991, 955], [1044, 955],
    // only in the overview
    [1223, 134], [1202, 182], [1245, 182], [1183, 231], [1221, 231],
    [1213, 373], [1193, 422], [1236, 430], [1174, 468], [1211, 468],
    [1103, 594], [1067, 653], [1139, 653],
    [1173, 753], [1124, 800], [1221, 800],
    [1157, 889], [1133, 945], [1180, 945],
    [1266, 889], [1241, 938], [1289, 938],
    [351, 1015], [327, 1065], [375, 1065]
];

// from x, from y, level of the horizontal run, to x, to y
const edges = [
    [474, 151, 175.5, 456.5, 217], [474, 151, 175.5, 492.5, 199.5],
    [456.5, 217, 242, 438.5, 275], [456.5, 217, 242, 474.5, 266.5],
    [438.5, 275, 299, 420, 332.5], [438.5, 275, 299, 456, 323.5],
    [420, 332.5, 357.5, 402, 390], [420, 332.5, 357.5, 437, 381.5],
    [402, 390, 414.5, 380.5, 448], [402, 390, 414.5, 423.5, 438.5],
    [380.5, 448, 472.5, 350.5, 496], [380.5, 448, 472.5, 411.5, 496],
    [648.5, 151, 171.5, 617.5, 209], [660.5, 151, 171.5, 690.5, 209],
    [611.5, 209, 229.5, 581.5, 253], [623.5, 209, 229.5, 629.5, 253],
    [684.5, 209, 229.5, 678.5, 253], [696.5, 209, 229.5, 762.5, 253],
    [672.5, 253, 273.5, 611.5, 297.5], [684.5, 253, 273.5, 684.5, 297.5],
    [756.5, 253, 273.5, 756.5, 297.5], [768.5, 253, 273.5, 805.5, 297.5],
    [678.5, 297.5, 335.5, 647.5, 359.5], [690.5, 297.5, 335.5, 720.5, 359.5],
    [906.5, 142.5, 162.5, 892.5, 186.5], [918.5, 142.5, 162.5, 940.5, 186.5],
    [886.5, 186.5, 206.5, 866.5, 230.5], [898.5, 186.5, 206.5, 915.5, 230.5],
    [909.5, 230.5, 250.5, 873.5, 274.5], [921.5, 230.5, 250.5, 921.5, 274.5],
    [942.5, 353.5, 377.5, 924.5, 401.5], [942.5, 353.5, 377.5, 960.5, 401.5],
    [924.5, 401.5, 425.5, 894.5, 449.5], [924.5, 401.5, 425.5, 954.5, 449.5],
    [1077, 154, 176, 1061, 198], [1077, 154, 176, 1097, 198], [1061, 198, 225, 1037.5, 248.5], [1061, 198, 225, 1078, 249],
    [1063, 375, 398, 1039.5, 419.5], [1063, 375, 398, 1086, 432], [1039.5, 419.5, 444.5, 1021.5, 467.5], [1039.5, 419.5, 444.5, 1060, 468],
    [359.5, 593.5, 617.5, 341, 641.5], [359.5, 593.5, 617.5, 377.5, 641.5], [341, 641.5, 666, 323, 690], [341, 641.5, 666, 359.5, 690],
    [475.5, 584.5, 608.5, 457.5, 632.5], [475.5, 584.5, 608.5, 494, 632.5], [457.5, 632.5, 657.5, 439, 681.5], [457.5, 632.5, 657.5, 475.5, 681.5],
    [591.5, 584.5, 608.5, 573, 632.5], [591.5, 584.5, 608.5, 609.5, 632.5], [573, 632.5, 657.5, 555, 681.5], [573, 632.5, 657.5, 591.5, 681.5],
    [717.5, 575.5, 599.5, 688, 623.5], [717.5, 575.5, 599.5, 747, 623.5], [688, 623.5, 648.5, 671, 672.5], [688, 623.5, 648.5, 707.5, 672.5],
    [868.5, 575.5, 599.5, 850.5, 623.5], [868.5, 575.5, 599.5, 887, 623.5], [850.5, 623.5, 648.5, 832.5, 672.5], [850.5, 623.5, 648.5, 869, 672.5],
    [984.5, 575.5, 599.5, 966.5, 623.5], [984.5, 575.5, 599.5, 1003, 623.5], [966.5, 623.5, 648.5, 949, 672.5], [966.5, 623.5, 648.5, 985, 672.5],
    [359.5, 751.5, 751.5, 322.5, 808.5], [359.5, 751.5, 751.5, 395, 808.5],
    [547.5, 751.5, 751.5, 511.5, 799.5], [547.5, 751.5, 751.5, 583.5, 799.5],
    [680.5, 751.5, 751.5, 644.5, 799.5], [680.5, 751.5, 751.5, 716.5, 799.5],
    [841.5, 751.5, 751.5, 804.5, 799.5], [841.5, 751.5, 751.5, 877.5, 799.5],
    [998.5, 751.5, 751.5, 962.5, 799.5], [998.5, 751.5, 751.5, 1034.5, 799.5],
    [359.5, 887.5, 887.5, 322.5, 935], [359.5, 887.5, 887.5, 395, 935],
    [504.5, 887.5, 887.5, 481, 935], [504.5, 887.5, 887.5, 528.5, 935],
    [662, 887.5, 887.5, 639, 935], [662, 887.5, 887.5, 686.5, 935],
    [771.5, 887.5, 887.5, 748, 935], [771.5, 887.5, 887.5, 795.5, 935],
    [905.5, 887.5, 887.5, 882, 955], [905.5, 887.5, 887.5, 930, 955],
    [1015, 905.5, 905.5, 991, 955], [1015, 905.5, 905.5, 1044, 955],
    [1223, 134, 160, 1202, 182], [1223, 134, 160, 1245, 182], [1202, 182, 207, 1183, 231], [1202, 182, 207, 1221, 231],
    [1213, 373, 398, 1193, 422], [1213, 373, 398, 1236, 430], [1193, 422, 445, 1174, 468], [1193, 422, 445, 1211, 468],
    [1103, 594, 594, 1067, 653], [1103, 594, 594, 1139, 653],
    [1173, 753, 753, 1124, 800], [1173, 753, 753, 1221, 800],
    [1157, 889, 889, 1133, 945], [1157, 889, 889, 1180, 945],
    [1266, 889, 889, 1241, 938], [1266, 889, 889, 1289, 938],
    [351, 1015, 1015, 327, 1065], [351, 1015, 1015, 375, 1065]
];

const selectedLabel = '2621';

function drawEdge(e, r, size) {
    const [fx, fy, mid, tx, ty] = e;
    const top = ty - r;
    let s = `<path class="link" d="M${fx} ${fy}V${mid}H${tx}V${top - 5}"/>`;
    if (size) {
        const w = 4.2 * size, h = 10 * size, n = 7 * size;
        s += `<path class="arrow" d="M${tx} ${top}l${-w} ${-h}l${w} ${h - n}l${w} ${n - h}z"/>`;
    }
    return s;
}

function drawNode(n, r, withLabel) {
    const [x, y, label, lx, ly] = n;
    const cls = label === selectedLabel ? 'node selected' : 'node';
    let s = `<circle class="${cls}" cx="${x}" cy="${y}" r="${r}"/>`;
    if (withLabel && label) {
        s += `<text class="lbl" x="${lx === undefined ? x : lx}" y="${ly === undefined ? y : ly}">${label}</text>`;
    }
    return s;
}

function handles(cx, cy, d, size) {
    let s = '';
    for (const dy of [-d, 0, d]) {
        for (const dx of [-d, 0, d]) {
            if (dx || dy) {
                s += `<rect class="handle" x="${cx + dx - size / 2}" y="${cy + dy - size / 2}" width="${size}" height="${size}"/>`;
            }
        }
    }
    return s;
}

// main canvas
const canvas = document.getElementById('canvas-svg');
canvas.innerHTML =
    edges.map(e => drawEdge(e, 12, 1)).join('') +
    nodes.map(n => drawNode(n, 12, true)).join('') +
    handles(420.3, 333, 15.3, 4);

// overview shows the same graph at a quarter of the size
const overview = document.getElementById('overview-svg');
overview.classList.add('mini');
overview.innerHTML =
    '<rect x="300" y="100" width="738" height="827" fill="#fff"/>' +
    edges.map(e => drawEdge(e, 12, 0)).join('') +
    nodes.map(n => drawNode(n, 13, false)).join('') +
    '<path class="dim" d="M300 100h1010v1000H300zM300 100v827h738V100z"/>' +
    '<path class="view" d="M300 927H1038V100"/>' +
    '<rect class="handle" x="1032" y="921" width="12" height="12"/>';

// neighbourhood of the selected node
const near = document.getElementById('neighbour-svg');
near.classList.add('near');
const nearNodes = [
    [128.5, 456.5, '2338', 95, 439.5], [128.5, 507.5, '2621', 95, 490.5],
    [110.5, 562.5, '2761', 76.5, 545.5], [145.5, 562.5, '2722', 177, 591.5]
];
const nearEdges = [
    [128.5, 456.5, 470, 128.5, 507.5], [120.5, 507.5, 532.5, 110.5, 562.5], [135.5, 507.5, 532.5, 145.5, 562.5]
];
near.innerHTML =
    nearEdges.map(e => drawEdge(e, 15, 1.25)).join('') +
    nearNodes.map(n => drawNode(n, 15, true)).join('') +
    handles(128.7, 507.7, 19, 5);
```
